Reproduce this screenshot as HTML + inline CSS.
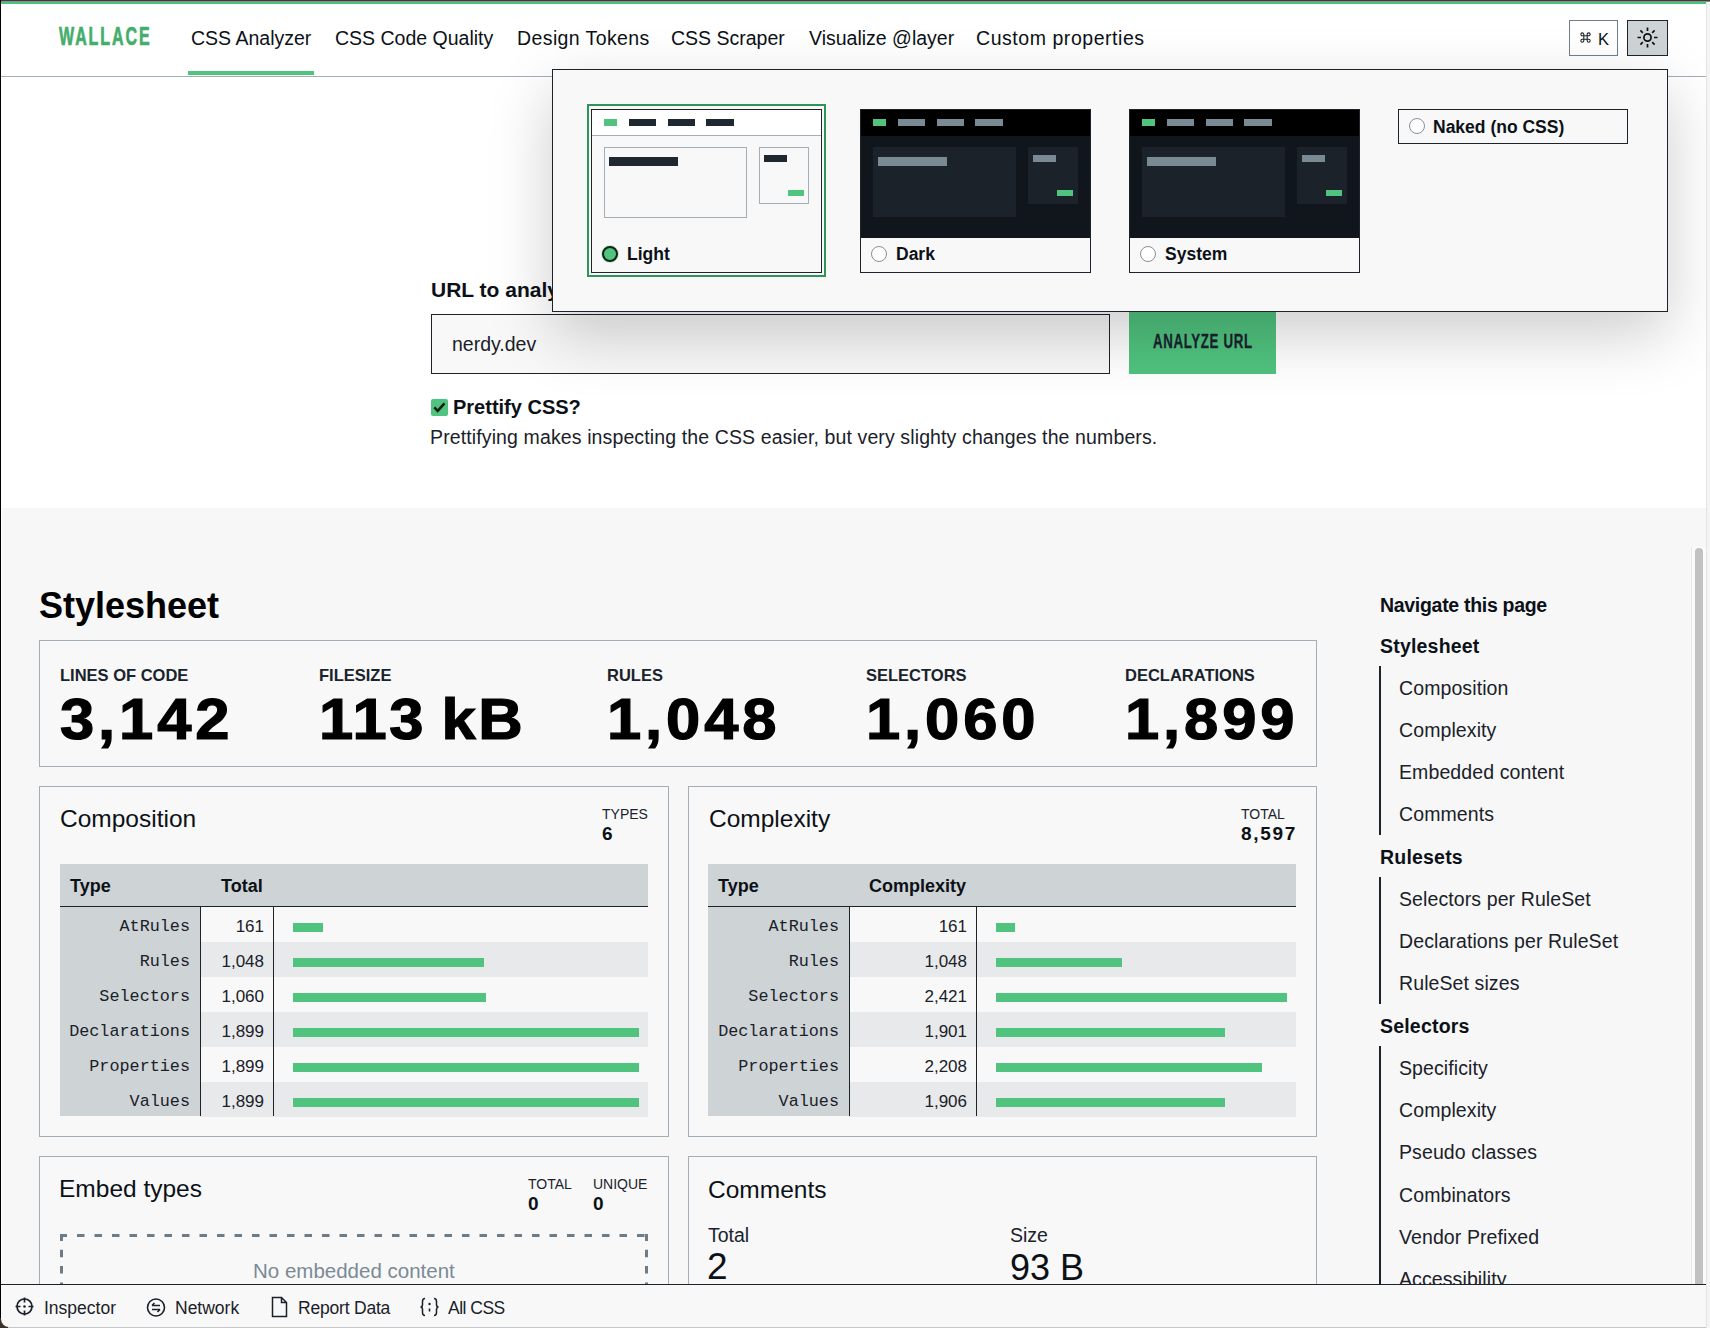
<!DOCTYPE html>
<html><head><meta charset="utf-8"><style>
*{box-sizing:border-box;margin:0;padding:0}
html,body{width:1710px;height:1328px;overflow:hidden;background:#f8f8f8}
body{font-family:"Liberation Sans",sans-serif;color:#0c1117;position:relative}
.a{position:absolute;white-space:nowrap}
#frame{position:absolute;left:0;top:0;width:1706px;height:1328px;overflow:hidden;background:#fff}
#corner{position:absolute;left:0;top:1318px;width:10px;height:10px;background:#3b3026;z-index:70;overflow:hidden}
#corner div{position:absolute;left:1px;top:-10px;width:30px;height:19px;background:#f8f8f8;border-bottom-left-radius:8px}
#botline{position:absolute;left:8px;top:1327px;width:1698px;height:1px;background:#c4c6c8;z-index:70}
#rstrip{position:absolute;left:1706px;top:0;width:4px;height:1328px;background:#f4f4f4;border-left:1px solid #e4e4e4}
#lstrip{position:absolute;left:0;top:0;width:1px;height:1328px;background:#000;z-index:50}
#topbar{position:absolute;left:0;top:0;width:1706px;height:4px;background:linear-gradient(#3d3d3d 0 1px,#8c8a8c 1px 2px,#47c57a 2px 4px)}
#topdark{position:absolute;left:1706px;top:0;width:4px;height:2px;background:linear-gradient(#3d3d3d 0 1px,#8c8a8c 1px 2px);z-index:60}
#hdrline{position:absolute;left:1px;top:76px;width:1705px;height:1px;background:#a4aeb6}
.nav{position:absolute;top:26px;font-size:19.5px;color:#0c1117;line-height:24px;white-space:nowrap}
#logo{position:absolute;left:59px;top:22px;font-size:25px;font-weight:700;color:#44ad6c;transform:scaleX(.64);transform-origin:0 0;letter-spacing:3px;line-height:28px;-webkit-text-stroke:.7px #44ad6c}
#under{position:absolute;left:188px;top:71px;width:126px;height:4px;background:#4ec47f}
#kbtn{position:absolute;left:1569px;top:20px;width:49px;height:36px;border:1px solid #6f7f8c;background:#fff;font-size:16px;line-height:34px;text-align:center;color:#0c1117}
#sbtn{position:absolute;left:1627px;top:20px;width:41px;height:36px;border:1.5px solid #1c232b;background:#ced3d6}
#lower{position:absolute;left:2px;top:508px;width:1704px;height:820px;background:#f7f7f7}
#urllbl{position:absolute;left:431px;top:278px;font-size:21px;font-weight:700;line-height:24px;white-space:nowrap}
#url{position:absolute;left:431px;top:314px;width:679px;height:60px;border:1px solid #1c232b;background:#f8f8f8}
#url span{position:absolute;left:20px;top:17px;font-size:19.5px;line-height:24px;color:#1a2129}
#abtn{position:absolute;left:1129px;top:300px;width:147px;height:74px;background:#50c37e}
#abtn span{position:absolute;white-space:nowrap;left:24px;top:31px;font-size:20px;font-weight:700;color:#1b2330;transform:scaleX(.664);transform-origin:0 0;letter-spacing:1px;line-height:20px;-webkit-text-stroke:.3px #1b2330}
#chk{position:absolute;left:431px;top:399px;width:17px;height:17px;background:#50c37e;border-radius:2px}
#chklbl{position:absolute;left:453px;top:395px;font-size:20px;font-weight:700;line-height:24px;white-space:nowrap}
#help{position:absolute;left:430px;top:425px;font-size:19.5px;white-space:nowrap;line-height:24px;color:#1a2129;letter-spacing:.12px}
#pop{position:absolute;left:552px;top:69px;width:1116px;height:243px;border:1px solid #1c232b;background:#f8f8f8;box-shadow:0 22px 60px rgba(0,0,0,.2)}
.card{position:absolute;top:109px;width:231px;height:164px;border:1px solid #1c232b;background:#f8f8f8;overflow:hidden}
.card .pv{position:absolute;left:0;top:0;width:230px;height:128px}
.card .nv{position:absolute;left:0;top:0;width:230px;height:26px}
.card b.r{position:absolute;display:block}
.lbl{position:absolute;left:35px;top:132px;font-size:17.5px;font-weight:700;line-height:24px;white-space:nowrap}
.radio{position:absolute;width:16px;height:16px;border-radius:50%;border:1px solid #8a8f98;background:#fff}
.box{position:absolute;border:1px solid #a3aeb7;background:#f8f8f8}
.h1{position:absolute;font-size:36px;font-weight:700;color:#000;line-height:40px;white-space:nowrap}
.slbl{position:absolute;top:665px;font-size:16.5px;font-weight:700;color:#1a232c;line-height:20px;white-space:nowrap}
.snum{position:absolute;top:686px;font-size:57px;font-weight:700;color:#000;line-height:66px;white-space:nowrap;transform:scaleX(1.08);transform-origin:0 0;-webkit-text-stroke:1.2px #000;letter-spacing:3.6px}
.h2{position:absolute;font-size:24.5px;color:#0c1117;line-height:28px;white-space:nowrap}
.mlbl{position:absolute;font-size:14px;color:#1a232c;line-height:16px;white-space:nowrap}
.mval{position:absolute;font-size:19px;font-weight:700;color:#0c1117;line-height:20px;white-space:nowrap;letter-spacing:1px}
.tbl{position:absolute;top:864px;height:252px;background:#f8f8f8}
.th{position:absolute;left:0;top:0;height:43px;background:#ced3d6;border-bottom:1px solid #1c232b;width:100%}
.th span{position:absolute;top:12px;font-size:18px;font-weight:700;line-height:20px;white-space:nowrap}
.c1{position:absolute;left:0;top:43px;height:209px;background:#ced3d6}
.sep{position:absolute;top:43px;height:209px;width:1px;background:#1c232b}
.stripe{position:absolute;height:35px;background:#e8e9ea}
.tn{position:absolute;font-family:"Liberation Mono",monospace;font-size:16.8px;color:#1a2129;line-height:20px;text-align:right;white-space:nowrap}
.tv{position:absolute;font-size:17px;color:#1a2129;line-height:20px;text-align:right;white-space:nowrap}
.bar{position:absolute;height:9px;background:#50c37e}
.side{position:absolute;font-size:19.5px;letter-spacing:.1px;color:#1a2129;line-height:24px;white-space:nowrap}
.sideb{position:absolute;font-size:19.5px;letter-spacing:.2px;font-weight:700;color:#0c1117;line-height:24px;white-space:nowrap}
.vline{position:absolute;left:1379px;width:2px;background:#1c232b}
#footer{position:absolute;left:1px;top:1284px;width:1705px;height:44px;background:#f8f8f8;border-top:1px solid #1c232b;z-index:40}
.ft{position:absolute;top:13px;font-size:17.5px;color:#1a2129;line-height:20px;white-space:nowrap}
#sb{position:absolute;left:1691px;top:547px;width:15px;height:737px;background:#fafafa;border-left:1px solid #e8e8e8}
#sbt{position:absolute;left:1695px;top:548px;width:8px;height:736px;background:#c1c1c1;border-radius:4px 4px 0 0}
</style></head><body>
<div id="frame">
<div id="topbar"></div><div id="lstrip"></div>
<div id="logo">WALLACE</div>
<div class="nav" style="left:191px;letter-spacing:0px">CSS Analyzer</div>
<div class="nav" style="left:335px;letter-spacing:0px">CSS Code Quality</div>
<div class="nav" style="left:517px;letter-spacing:0.4px">Design Tokens</div>
<div class="nav" style="left:671px;letter-spacing:0px">CSS Scraper</div>
<div class="nav" style="left:809px;letter-spacing:0px">Visualize @layer</div>
<div class="nav" style="left:976px;letter-spacing:0.55px">Custom properties</div>
<div id="under"></div><div id="hdrline"></div>
<div id="kbtn"><svg class="a" style="left:10px;top:10.5px" width="11" height="11" viewBox="0 0 13 13"><g fill="none" stroke="#1a2129" stroke-width="1.25"><path d="M4.5 4.5V2.75A1.75 1.75 0 1 0 2.75 4.5H10.25A1.75 1.75 0 1 0 8.5 2.75V10.25A1.75 1.75 0 1 0 10.25 8.5H2.75A1.75 1.75 0 1 0 4.5 10.25Z"/></g></svg><span class="a" style="left:28px;top:1px;font-size:16.5px;line-height:34px">K</span></div>
<div id="sbtn"><svg width="38" height="33" viewBox="0 0 38 33" style="position:absolute;left:0;top:0"><g stroke="#111" stroke-width="1.7" fill="none"><circle cx="19.5" cy="16.5" r="3.6"/><path d="M19.5 6.5v3.5M19.5 23v3.5M9.5 16.5H13M26 16.5h3.5M12.4 9.4l2.4 2.4M24.2 21.2l2.4 2.4M12.4 23.6l2.4-2.4M24.2 11.8l2.4-2.4"/></g></svg></div>
<div id="urllbl">URL to analyze</div>
<div id="url"><span>nerdy.dev</span></div>
<div id="abtn"><span>ANALYZE URL</span></div>
<div id="chk"><svg width="17" height="17" viewBox="0 0 17 17"><path d="M3.3 8.3l3.4 3.6 6.8-7.6" stroke="#0c1a10" stroke-width="2.5" fill="none"/></svg></div>
<div id="chklbl">Prettify CSS?</div>
<div id="help">Prettifying makes inspecting the CSS easier, but very slighty changes the numbers.</div>
<div id="lower"></div>
<div class="h1" style="left:39px;top:586px">Stylesheet</div>
<div class="box" style="left:39px;top:640px;width:1278px;height:127px"></div>
<div class="slbl" style="left:60px">LINES OF CODE</div>
<div class="snum" style="left:60px">3,142</div>
<div class="slbl" style="left:319px">FILESIZE</div>
<div class="snum" style="left:319px;word-spacing:-4px;letter-spacing:2.4px">113 kB</div>
<div class="slbl" style="left:607px">RULES</div>
<div class="snum" style="left:607px">1,048</div>
<div class="slbl" style="left:866px">SELECTORS</div>
<div class="snum" style="left:866px">1,060</div>
<div class="slbl" style="left:1125px">DECLARATIONS</div>
<div class="snum" style="left:1125px">1,899</div>
<div class="box" style="left:39px;top:786px;width:630px;height:351px"></div>
<div class="h2" style="left:60px;top:805px">Composition</div>
<div class="tbl" style="left:60px;width:588px">
<div class="stripe" style="left:140px;top:78px;width:448px"></div>
<div class="stripe" style="left:140px;top:148px;width:448px"></div>
<div class="stripe" style="left:140px;top:218px;width:448px"></div>
<div class="th"><span style="left:10px">Type</span><span style="left:161px">Total</span></div>
<div class="c1" style="width:140px"></div>
<div class="sep" style="left:140px"></div>
<div class="sep" style="left:213px"></div>
<div class="tn" style="right:458px;top:53px">AtRules</div>
<div class="tv" style="right:384px;top:52.5px">161</div>
<div class="bar" style="left:233px;top:59px;width:30px"></div>
<div class="tn" style="right:458px;top:88px">Rules</div>
<div class="tv" style="right:384px;top:87.5px">1,048</div>
<div class="bar" style="left:233px;top:94px;width:191px"></div>
<div class="tn" style="right:458px;top:123px">Selectors</div>
<div class="tv" style="right:384px;top:122.5px">1,060</div>
<div class="bar" style="left:233px;top:129px;width:193px"></div>
<div class="tn" style="right:458px;top:158px">Declarations</div>
<div class="tv" style="right:384px;top:157.5px">1,899</div>
<div class="bar" style="left:233px;top:164px;width:346px"></div>
<div class="tn" style="right:458px;top:193px">Properties</div>
<div class="tv" style="right:384px;top:192.5px">1,899</div>
<div class="bar" style="left:233px;top:199px;width:346px"></div>
<div class="tn" style="right:458px;top:228px">Values</div>
<div class="tv" style="right:384px;top:227.5px">1,899</div>
<div class="bar" style="left:233px;top:234px;width:346px"></div>
</div>
<div class="box" style="left:688px;top:786px;width:629px;height:351px"></div>
<div class="h2" style="left:709px;top:805px">Complexity</div>
<div class="tbl" style="left:708px;width:588px">
<div class="stripe" style="left:141px;top:78px;width:447px"></div>
<div class="stripe" style="left:141px;top:148px;width:447px"></div>
<div class="stripe" style="left:141px;top:218px;width:447px"></div>
<div class="th"><span style="left:10px">Type</span><span style="left:161px">Complexity</span></div>
<div class="c1" style="width:141px"></div>
<div class="sep" style="left:141px"></div>
<div class="sep" style="left:268px"></div>
<div class="tn" style="right:457px;top:53px">AtRules</div>
<div class="tv" style="right:329px;top:52.5px">161</div>
<div class="bar" style="left:288px;top:59px;width:19px"></div>
<div class="tn" style="right:457px;top:88px">Rules</div>
<div class="tv" style="right:329px;top:87.5px">1,048</div>
<div class="bar" style="left:288px;top:94px;width:126px"></div>
<div class="tn" style="right:457px;top:123px">Selectors</div>
<div class="tv" style="right:329px;top:122.5px">2,421</div>
<div class="bar" style="left:288px;top:129px;width:291px"></div>
<div class="tn" style="right:457px;top:158px">Declarations</div>
<div class="tv" style="right:329px;top:157.5px">1,901</div>
<div class="bar" style="left:288px;top:164px;width:229px"></div>
<div class="tn" style="right:457px;top:193px">Properties</div>
<div class="tv" style="right:329px;top:192.5px">2,208</div>
<div class="bar" style="left:288px;top:199px;width:266px"></div>
<div class="tn" style="right:457px;top:228px">Values</div>
<div class="tv" style="right:329px;top:227.5px">1,906</div>
<div class="bar" style="left:288px;top:234px;width:229px"></div>
</div>
<div class="mlbl" style="left:602px;top:806px">TYPES</div><div class="mval" style="left:602px;top:824px">6</div>
<div class="mlbl" style="left:1241px;top:806px">TOTAL</div><div class="mval" style="left:1241px;top:824px;letter-spacing:1.7px">8,597</div>
<div class="box" style="left:39px;top:1156px;width:630px;height:200px"></div>
<div class="h2" style="left:59px;top:1175px">Embed types</div>
<div class="mlbl" style="left:528px;top:1176px">TOTAL</div><div class="mval" style="left:528px;top:1194px">0</div>
<div class="mlbl" style="left:593px;top:1176px">UNIQUE</div><div class="mval" style="left:593px;top:1194px">0</div>
<svg class="a" style="left:60px;top:1234px" width="588" height="100"><g fill="none" stroke="#6d7c87" stroke-width="3"><path d="M0 1.5H588" stroke-dasharray="7.5 10" stroke-dashoffset=".5"/><path d="M1.5 0V100M586.5 0V100" stroke-dasharray="7.5 8.8" stroke-dashoffset=".5"/></g></svg>
<div class="a" style="left:253px;top:1259px;font-size:20.5px;color:#7b8a95;line-height:24px">No embedded content</div>
<div class="box" style="left:688px;top:1156px;width:629px;height:200px"></div>
<div class="h2" style="left:708px;top:1176px">Comments</div>
<div class="a" style="left:708px;top:1224px;font-size:19.5px;color:#1a232c;line-height:22px">Total</div>
<div class="a" style="left:707px;top:1247px;font-size:37px;color:#0c1117;line-height:40px">2</div>
<div class="a" style="left:1010px;top:1224px;font-size:19.5px;color:#1a232c;line-height:22px">Size</div>
<div class="a" style="left:1010px;top:1248px;font-size:36px;color:#0c1117;line-height:40px">93 B</div>
<div class="sideb" style="left:1380px;top:593px;letter-spacing:-.3px">Navigate this page</div>
<div class="sideb" style="left:1380px;top:634px">Stylesheet</div>
<div class="vline" style="top:666px;height:169px"></div>
<div class="side" style="left:1399px;top:676px">Composition</div>
<div class="side" style="left:1399px;top:718px">Complexity</div>
<div class="side" style="left:1399px;top:760px">Embedded content</div>
<div class="side" style="left:1399px;top:802px">Comments</div>
<div class="sideb" style="left:1380px;top:845px">Rulesets</div>
<div class="vline" style="top:877px;height:127px"></div>
<div class="side" style="left:1399px;top:887px">Selectors per RuleSet</div>
<div class="side" style="left:1399px;top:929px">Declarations per RuleSet</div>
<div class="side" style="left:1399px;top:971px">RuleSet sizes</div>
<div class="sideb" style="left:1380px;top:1014px">Selectors</div>
<div class="vline" style="top:1046px;height:260px"></div>
<div class="side" style="left:1399px;top:1056px">Specificity</div>
<div class="side" style="left:1399px;top:1098px">Complexity</div>
<div class="side" style="left:1399px;top:1140px">Pseudo classes</div>
<div class="side" style="left:1399px;top:1183px">Combinators</div>
<div class="side" style="left:1399px;top:1225px">Vendor Prefixed</div>
<div class="side" style="left:1399px;top:1267px">Accessibility</div>
<div id="sb"></div><div id="sbt"></div>
<div id="footer">
<svg class="a" style="left:13px;top:11px" width="22" height="22" viewBox="0 0 22 22"><g stroke="#1a2129" stroke-width="1.7" fill="none"><circle cx="10.5" cy="10.5" r="7.5"/><path d="M10.5 1.5v5M10.5 14.5v5M1.5 10.5h5M14.5 10.5h5"/></g><circle cx="10.5" cy="10.5" r="1.3" fill="#1a2129"/></svg>
<div class="ft" style="left:43px">Inspector</div>
<svg class="a" style="left:144px;top:12px" width="22" height="22" viewBox="0 0 22 22"><g stroke="#1a2129" stroke-width="1.6" fill="none"><circle cx="11" cy="10.5" r="8.5"/><path d="M7 8.5h8M7 8.5l2.5-2.5M15 12.5H7M15 12.5l-2.5 2.5"/></g></svg>
<div class="ft" style="left:174px">Network</div>
<svg class="a" style="left:268px;top:11px" width="22" height="22" viewBox="0 0 22 22"><g stroke="#1a2129" stroke-width="1.5" fill="none"><path d="M3.5 1.5h9l5 5v14h-14z M12.5 1.5v5h5"/></g></svg>
<div class="ft" style="left:297px;letter-spacing:-.2px">Report Data</div>
<svg class="a" style="left:418px;top:11px" width="22" height="22" viewBox="0 0 22 22"><g stroke="#1a2129" stroke-width="1.5" fill="none"><path d="M6 2.5c-2 0-2.5 1-2.5 3v3c0 1.5-.8 2.5-2 2.5 1.2 0 2 1 2 2.5v3c0 2 .5 3 2.5 3M15 2.5c2 0 2.5 1 2.5 3v3c0 1.5.8 2.5 2 2.5-1.2 0-2 1-2 2.5v3c0 2-.5 3-2.5 3"/></g><circle cx="10.5" cy="8" r="1.2" fill="#1a2129"/><path d="M10.5 12.5v3" stroke="#1a2129" stroke-width="1.6"/></svg>
<div class="ft" style="left:447px;letter-spacing:-.5px">All CSS</div>
</div>
<div id="pop"></div>
<div class="a" style="left:587px;top:104px;width:239px;height:173px;border:2px solid #2f9458"></div>
<div class="card" style="left:591px">
<div class="pv" style="background:#f8f8f8"></div>
<div class="nv" style="background:#fff;border-bottom:1px solid #a4aeb6;"></div>
<b class="r" style="left:12px;top:9px;width:13px;height:7px;background:#50c37e;"></b>
<b class="r" style="left:37px;top:9px;width:27px;height:7px;background:#1f2730;"></b>
<b class="r" style="left:76px;top:9px;width:27px;height:7px;background:#1f2730;"></b>
<b class="r" style="left:114px;top:9px;width:28px;height:7px;background:#1f2730;"></b>
<b class="r" style="left:12px;top:37px;width:143px;height:71px;background:transparent;border:1px solid #a4aeb6"></b>
<b class="r" style="left:167px;top:37px;width:50px;height:57px;background:transparent;border:1px solid #a4aeb6"></b>
<b class="r" style="left:17px;top:47px;width:69px;height:9px;background:#1f2730;"></b>
<b class="r" style="left:172px;top:45px;width:23px;height:7px;background:#1f2730;"></b>
<b class="r" style="left:196px;top:80px;width:16px;height:6px;background:#50c37e;"></b>
<div class="radio" style="left:10px;top:136px;border:2px solid #0f2416;background:#50c37e;box-shadow:0 0 0 1px #bfe9cf"></div>
<div class="lbl">Light</div>
</div>
<div class="card" style="left:860px">
<div class="pv" style="background:#10161c"></div>
<div class="nv" style="background:#000;"></div>
<b class="r" style="left:12px;top:9px;width:13px;height:7px;background:#50c37e;"></b>
<b class="r" style="left:37px;top:9px;width:27px;height:7px;background:#7a8a94;"></b>
<b class="r" style="left:76px;top:9px;width:27px;height:7px;background:#7a8a94;"></b>
<b class="r" style="left:114px;top:9px;width:28px;height:7px;background:#7a8a94;"></b>
<b class="r" style="left:12px;top:37px;width:143px;height:70px;background:#1c2229;"></b>
<b class="r" style="left:167px;top:37px;width:50px;height:57px;background:#1c2229;"></b>
<b class="r" style="left:17px;top:47px;width:69px;height:9px;background:#7a8a94;"></b>
<b class="r" style="left:172px;top:45px;width:23px;height:7px;background:#7a8a94;"></b>
<b class="r" style="left:196px;top:80px;width:16px;height:6px;background:#50c37e;"></b>
<div class="radio" style="left:10px;top:136px"></div>
<div class="lbl">Dark</div>
</div>
<div class="card" style="left:1129px">
<div class="pv" style="background:#10161c"></div>
<div class="nv" style="background:#000;"></div>
<b class="r" style="left:12px;top:9px;width:13px;height:7px;background:#50c37e;"></b>
<b class="r" style="left:37px;top:9px;width:27px;height:7px;background:#7a8a94;"></b>
<b class="r" style="left:76px;top:9px;width:27px;height:7px;background:#7a8a94;"></b>
<b class="r" style="left:114px;top:9px;width:28px;height:7px;background:#7a8a94;"></b>
<b class="r" style="left:12px;top:37px;width:143px;height:70px;background:#1c2229;"></b>
<b class="r" style="left:167px;top:37px;width:50px;height:57px;background:#1c2229;"></b>
<b class="r" style="left:17px;top:47px;width:69px;height:9px;background:#7a8a94;"></b>
<b class="r" style="left:172px;top:45px;width:23px;height:7px;background:#7a8a94;"></b>
<b class="r" style="left:196px;top:80px;width:16px;height:6px;background:#50c37e;"></b>
<div class="radio" style="left:10px;top:136px"></div>
<div class="lbl">System</div>
</div>
<div class="a" style="left:1398px;top:109px;width:230px;height:35px;border:1px solid #1c232b;background:#f8f8f8"><div class="radio" style="left:10px;top:8px"></div><div class="lbl" style="top:5px;left:34px">Naked (no CSS)</div></div>
</div>
<div id="rstrip"></div><div id="topdark"></div><div id="corner"><div></div></div><div id="botline"></div>
</body></html>
